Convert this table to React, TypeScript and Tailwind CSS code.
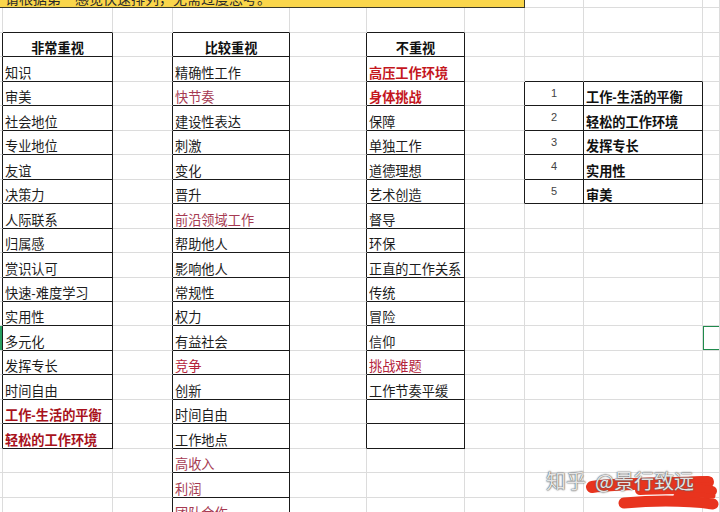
import React from "react";

const W = [
  "w-[3px]",
  "w-[110px]",
  "w-[60px]",
  "w-[117px]",
  "w-[77px]",
  "w-[98px]",
  "w-[60px]",
  "w-[59px]",
  "w-[119px]",
  "w-[17px]",
];

// row heights r0..r21
const H = [
  "h-[8px]",
  "h-[25px]",
  "h-[24px]",
  "h-[25px]",
  "h-[24px]",
  "h-[25px]",
  "h-[24px]",
  "h-[25px]",
  "h-[24px]",
  "h-[25px]",
  "h-[24px]",
  "h-[25px]",
  "h-[24px]",
  "h-[24px]",
  "h-[25px]",
  "h-[24px]",
  "h-[25px]",
  "h-[24px]",
  "h-[25px]",
  "h-[24px]",
  "h-[25px]",
  "h-[24px]",
];

type Kind =
  | "n"
  | "maroon"
  | "red"
  | "boldRed"
  | "boldDark"
  | "head"
  | "bold"
  | "num";

type Cell = { t: string; k: Kind };

const col1: Cell[] = [
  { t: "知识", k: "n" },
  { t: "审美", k: "n" },
  { t: "社会地位", k: "n" },
  { t: "专业地位", k: "n" },
  { t: "友谊", k: "n" },
  { t: "决策力", k: "n" },
  { t: "人际联系", k: "n" },
  { t: "归属感", k: "n" },
  { t: "赏识认可", k: "n" },
  { t: "快速-难度学习", k: "n" },
  { t: "实用性", k: "n" },
  { t: "多元化", k: "n" },
  { t: "发挥专长", k: "n" },
  { t: "时间自由", k: "n" },
  { t: "工作-生活的平衡", k: "boldDark" },
  { t: "轻松的工作环境", k: "boldDark" },
];

const col3: Cell[] = [
  { t: "精确性工作", k: "n" },
  { t: "快节奏", k: "maroon" },
  { t: "建设性表达", k: "n" },
  { t: "刺激", k: "n" },
  { t: "变化", k: "n" },
  { t: "晋升", k: "n" },
  { t: "前沿领域工作", k: "maroon" },
  { t: "帮助他人", k: "n" },
  { t: "影响他人", k: "n" },
  { t: "常规性", k: "n" },
  { t: "权力", k: "n" },
  { t: "有益社会", k: "n" },
  { t: "竞争", k: "red" },
  { t: "创新", k: "n" },
  { t: "时间自由", k: "n" },
  { t: "工作地点", k: "n" },
  { t: "高收入", k: "maroon" },
  { t: "利润", k: "maroon" },
  { t: "团队合作", k: "maroon" },
];

const col5: Cell[] = [
  { t: "高压工作环境", k: "boldRed" },
  { t: "身体挑战", k: "boldRed" },
  { t: "保障", k: "n" },
  { t: "单独工作", k: "n" },
  { t: "道德理想", k: "n" },
  { t: "艺术创造", k: "n" },
  { t: "督导", k: "n" },
  { t: "环保", k: "n" },
  { t: "正直的工作关系", k: "n" },
  { t: "传统", k: "n" },
  { t: "冒险", k: "n" },
  { t: "信仰", k: "n" },
  { t: "挑战难题", k: "red" },
  { t: "工作节奏平缓", k: "n" },
];

const rank: string[] = [
  "工作-生活的平衡",
  "轻松的工作环境",
  "发挥专长",
  "实用性",
  "审美",
];

function inTable(r: number, c: number): boolean {
  if (c === 1 || c === 5) return r >= 2 && r <= 18;
  if (c === 3) return r >= 2;
  if (c === 7 || c === 8) return r >= 4 && r <= 8;
  return false;
}

function content(r: number, c: number): Cell | null {
  if (r === 2) {
    if (c === 1) return { t: "非常重视", k: "head" };
    if (c === 3) return { t: "比较重视", k: "head" };
    if (c === 5) return { t: "不重视", k: "head" };
  }
  const i = r - 3;
  if (i >= 0) {
    if (c === 1 && col1[i]) return col1[i];
    if (c === 3 && col3[i]) return col3[i];
    if (c === 5 && col5[i]) return col5[i];
  }
  if (r >= 4 && r <= 8) {
    if (c === 7) return { t: String(r - 3), k: "num" };
    if (c === 8) return { t: rank[r - 4], k: "bold" };
  }
  return null;
}

const kindClass: Record<Kind, string> = {
  n: "text-[#1c1c1c] pl-[2px]",
  maroon: "text-[#a63a52] pl-[2px]",
  red: "text-[#b3223a] pl-[2px]",
  boldRed: "text-[#c4161d] font-bold pl-[2px]",
  boldDark: "text-[#a8121c] font-bold pl-[2px]",
  head: "text-[#111] font-bold w-full text-center",
  bold: "text-[#111] font-bold pl-[2px]",
  num: "",
};

function GridCell({ r, c }: { r: number; c: number }) {
  const rightBlack = inTable(r, c) || inTable(r, c + 1);
  const bottomBlack = inTable(r, c) || inTable(r + 1, c);
  const cell = content(r, c);
  const cls =
    "relative shrink-0 border-r border-b flex overflow-hidden whitespace-nowrap " +
    W[c] +
    " " +
    H[r] +
    " " +
    (rightBlack ? "border-r-[#1a1a1a]" : "border-r-[#dcdcdc]") +
    " " +
    (bottomBlack ? "border-b-[#1a1a1a]" : "border-b-[#dcdcdc]") +
    " " +
    (cell && cell.k === "num" ? "items-center justify-center" : "items-end");
  return (
    <div className={cls}>
      {cell && cell.k === "num" ? (
        <span className="text-[11px] leading-[11px] text-[#444] font-['Liberation_Sans',sans-serif] -mt-[1px]">
          {cell.t}
        </span>
      ) : cell ? (
        <span
          className={
            "text-[13.2px] leading-[13px] pb-[1px] " + kindClass[cell.k]
          }
        >
          {cell.t}
        </span>
      ) : null}
      {r === 14 && c === 9 ? (
        <div className="absolute -left-[1px] -top-[1px] w-[30px] h-[26px] border-2 border-[#1f8a4c]" />
      ) : null}
      {r === 14 && c === 0 ? (
        <div className="absolute left-0 top-0 bottom-0 w-[2px] bg-[#2aa060]" />
      ) : null}
    </div>
  );
}

export default function App() {
  const rows: number[] = [];
  for (let r = 1; r <= 21; r++) rows.push(r);
  const cols = [0, 1, 2, 3, 4, 5, 6, 7, 8, 9];
  return (
    <div className="relative w-[720px] h-[512px] overflow-hidden bg-white font-['Liberation_Sans','Noto_Sans_CJK_SC',sans-serif]">
      {/* row 0 */}
      <div className="flex h-[8px]">
        <div className="w-[525px] shrink-0 h-[8px] bg-[#fad64b] border-r border-b border-[#3a3a2a] overflow-hidden flex items-end">
          <span className="text-[14px] leading-[14px] pl-[5px] pb-[1px] text-[#2a2a2a] whitespace-nowrap">
            请根据第一感觉快速排列，无需过度思考。
          </span>
        </div>
        {[7, 8, 9].map((c) => (
          <div
            key={c}
            className={
              "shrink-0 h-[8px] border-r border-b border-[#dcdcdc] " + W[c]
            }
          />
        ))}
      </div>
      {rows.map((r) => (
        <div key={r} className="flex">
          {cols.map((c) => (
            <GridCell key={c} r={r} c={c} />
          ))}
        </div>
      ))}

      {/* watermark scribble */}
      <svg
        className="absolute left-[580px] top-[470px]"
        width="140"
        height="42"
        viewBox="0 0 140 42"
      >
        <g
          stroke="#e8341e"
          strokeLinecap="round"
          strokeLinejoin="round"
          fill="none"
        >
          <path d="M12 17 C40 13 80 14 128 12" strokeWidth="12" />
          <path d="M60 20 C90 19 112 18 132 21" strokeWidth="10" />
          <path d="M100 11 C115 9 124 9 130 10" strokeWidth="6" />
          <path d="M44 33 C78 30 110 31 133 34" strokeWidth="11" />
          <path d="M96 26 C112 25 124 25 133 26" strokeWidth="5" />
        </g>
      </svg>
      <div className="absolute left-[546px] top-[469px] flex gap-[9px] text-[20px] leading-[24px] text-[#e4e4e4] font-['Noto_Sans_CJK_SC',sans-serif] whitespace-nowrap [text-shadow:0_0_1px_#444,0_0_2px_#666]">
        <span>知乎</span>
        <span>@景行致远</span>
      </div>
    </div>
  );
}
